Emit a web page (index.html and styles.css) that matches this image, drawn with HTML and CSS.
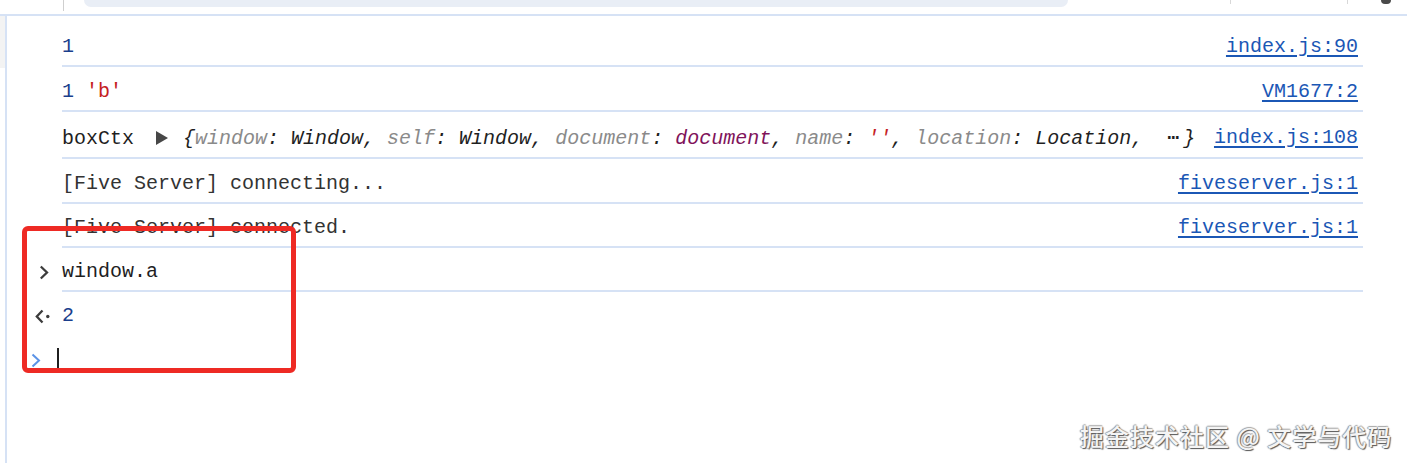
FILE: index.html
```html
<!DOCTYPE html>
<html lang="en">
<head>
  <meta charset="UTF-8">
  <title>Console</title>
  <link rel="stylesheet" href="styles.css">
</head>
<body>
  <div class="toolbar">
    <span class="tb-sep"></span>
    <span class="filter"></span>
    <span class="tb-line one"></span>
    <span class="tb-line two"></span>
    <span class="tb-icon"></span>
  </div>

  <div class="main">
    <div class="side"></div>
    <div class="console">

      <div class="entry">
        <div class="gutter"></div>
        <div class="msg">
          <span class="text"><span class="num">1</span></span>
          <a class="src">index.js:90</a>
        </div>
      </div>

      <div class="entry">
        <div class="gutter"></div>
        <div class="msg">
          <span class="text"><span class="num">1</span> <span class="str">'b'</span></span>
          <a class="src">VM1677:2</a>
        </div>
      </div>

      <div class="entry tall">
        <div class="gutter"></div>
        <div class="msg">
          <span class="text">boxCtx<svg class="tri" width="12" height="14" viewBox="0 0 12 14"><path d="M0 0 L12 7 L0 14 Z" fill="#474747"/></svg><span class="obj">{<span class="key">window</span>: Window, <span class="key">self</span>: Window, <span class="key">document</span>: <span class="doc">document</span>, <span class="key">name</span>: <span class="str">''</span>, <span class="key">location</span>: Location,  <span class="more">⋯</span>}</span></span>
          <a class="src">index.js:108</a>
        </div>
      </div>

      <div class="entry">
        <div class="gutter"></div>
        <div class="msg">
          <span class="text log">[Five Server] connecting...</span>
          <a class="src">fiveserver.js:1</a>
        </div>
      </div>

      <div class="entry short">
        <div class="gutter"></div>
        <div class="msg">
          <span class="text log">[Five Server] connected.</span>
          <a class="src">fiveserver.js:1</a>
        </div>
      </div>

      <div class="entry short">
        <div class="gutter">
          <svg class="icon in" width="10" height="15" viewBox="0 0 10 15"><path d="M1.8 1.5 L8 7.5 L1.8 13.5" fill="none" stroke="#3c3c3c" stroke-width="2.3"/></svg>
        </div>
        <div class="msg">
          <span class="text">window.a</span>
        </div>
      </div>

      <div class="entry short plain">
        <div class="gutter">
          <svg class="icon out" width="15" height="15" viewBox="0 0 15 15"><path d="M7.5 1.5 L1.8 7.5 L7.5 13.5" fill="none" stroke="#3c3c3c" stroke-width="2.3"/><circle cx="12.8" cy="7.5" r="1.7" fill="#3c3c3c"/></svg>
        </div>
        <div class="msg">
          <span class="text"><span class="num">2</span></span>
        </div>
      </div>

      <div class="entry short plain">
        <div class="gutter">
          <svg class="icon prompt" width="10" height="15" viewBox="0 0 10 15"><path d="M1.5 1.5 L8 7.5 L1.5 13.5" fill="none" stroke="#5b93e6" stroke-width="2"/></svg>
        </div>
        <div class="msg">
          <span class="caret"></span>
        </div>
      </div>

    </div>
  </div>

  <div class="highlight"></div>
  <div class="watermark">掘金技术社区 @ 文学与代码</div>
</body>
</html>
```

FILE: styles.css
```css
body {
  margin: 0;
  background: #fff;
  font-family: "Liberation Mono", "DejaVu Sans Mono", monospace;
  font-size: 20px;
  color: #1f1f1f;
  height: 463px;
  overflow: hidden;
}

/* top filter bar, cut off by the screenshot */
.toolbar {
  display: flex;
  align-items: flex-start;
  height: 14px;
  border-bottom: 2px solid #d6e2f5;
}
.tb-sep {
  width: 1px;
  height: 11px;
  margin-left: 63px;
  background: #cfcfcf;
}
.filter {
  width: 984px;
  height: 7px;
  margin-left: 20px;
  background: #e9eef6;
  border-radius: 0 0 14px 14px;
}
.tb-line {
  width: 1px;
  height: 4px;
  background: #d8d8d8;
}
.tb-line.one { margin-left: 162px; }
.tb-line.two { margin-left: 116px; }
.tb-icon {
  width: 10px;
  height: 4px;
  margin-left: 33px;
  background: #4a4a4a;
  border-radius: 0 0 5px 5px;
}

.main {
  display: flex;
}
.side {
  width: 5px;
  height: 52px;
  background: #f3f3f3;
}
.console {
  flex: 1;
  border-left: 2px solid #d6e2f5;
  padding-top: 6px;
  height: 460px;
}

.entry {
  display: flex;
  height: 45px;
}
.entry.tall { height: 47px; }
.entry.short { height: 44px; }
.gutter {
  width: 55px;
  flex: none;
  display: flex;
  align-items: center;
  padding-top: 4px;
}
.msg {
  width: 1301px;
  display: flex;
  align-items: center;
  justify-content: space-between;
  border-bottom: 2px solid #d6e2f5;
  padding: 5px 5px 0 0;
  box-sizing: border-box;
}
.entry.plain .msg {
  border-bottom-color: transparent;
}
.text {
  white-space: pre;
}
.log { color: #333; }
.num { color: #1a3e8c; }
.str { color: #c5221f; }
.doc { color: #80135a; }
.obj {
  font-style: italic;
  color: #1f1f1f;
}
.key { color: #8a8a8a; }
.more {
  font-style: normal;
  letter-spacing: 4px;
}
.tri {
  margin: 0 15px 0 22px;
  vertical-align: -1px;
}
.src {
  color: #1b57b5;
  text-decoration: underline;
  text-underline-offset: 3px;
  white-space: pre;
}

.icon.in { margin-left: 32px; }
.icon.out { margin-left: 28px; }
.icon.prompt { margin-left: 24px; }

.caret {
  width: 2px;
  height: 23px;
  margin-left: -5px;
  background: #1f1f1f;
}

/* annotation drawn over the screenshot */
.highlight {
  position: absolute;
  left: 22px;
  top: 226px;
  width: 274px;
  height: 147px;
  box-sizing: border-box;
  border: 5px solid #ee2a24;
  border-radius: 6px;
}
.watermark {
  position: absolute;
  left: 1080px;
  top: 418px;
  font-family: "Noto Sans CJK SC", sans-serif;
  font-size: 24px;
  font-weight: 500;
  letter-spacing: 1px;
  color: #f4f4f4;
  text-shadow: 1px 1px 1px #555, -1px 0 1px #999, 0 -1px 1px #aaa;
  white-space: nowrap;
}
```
